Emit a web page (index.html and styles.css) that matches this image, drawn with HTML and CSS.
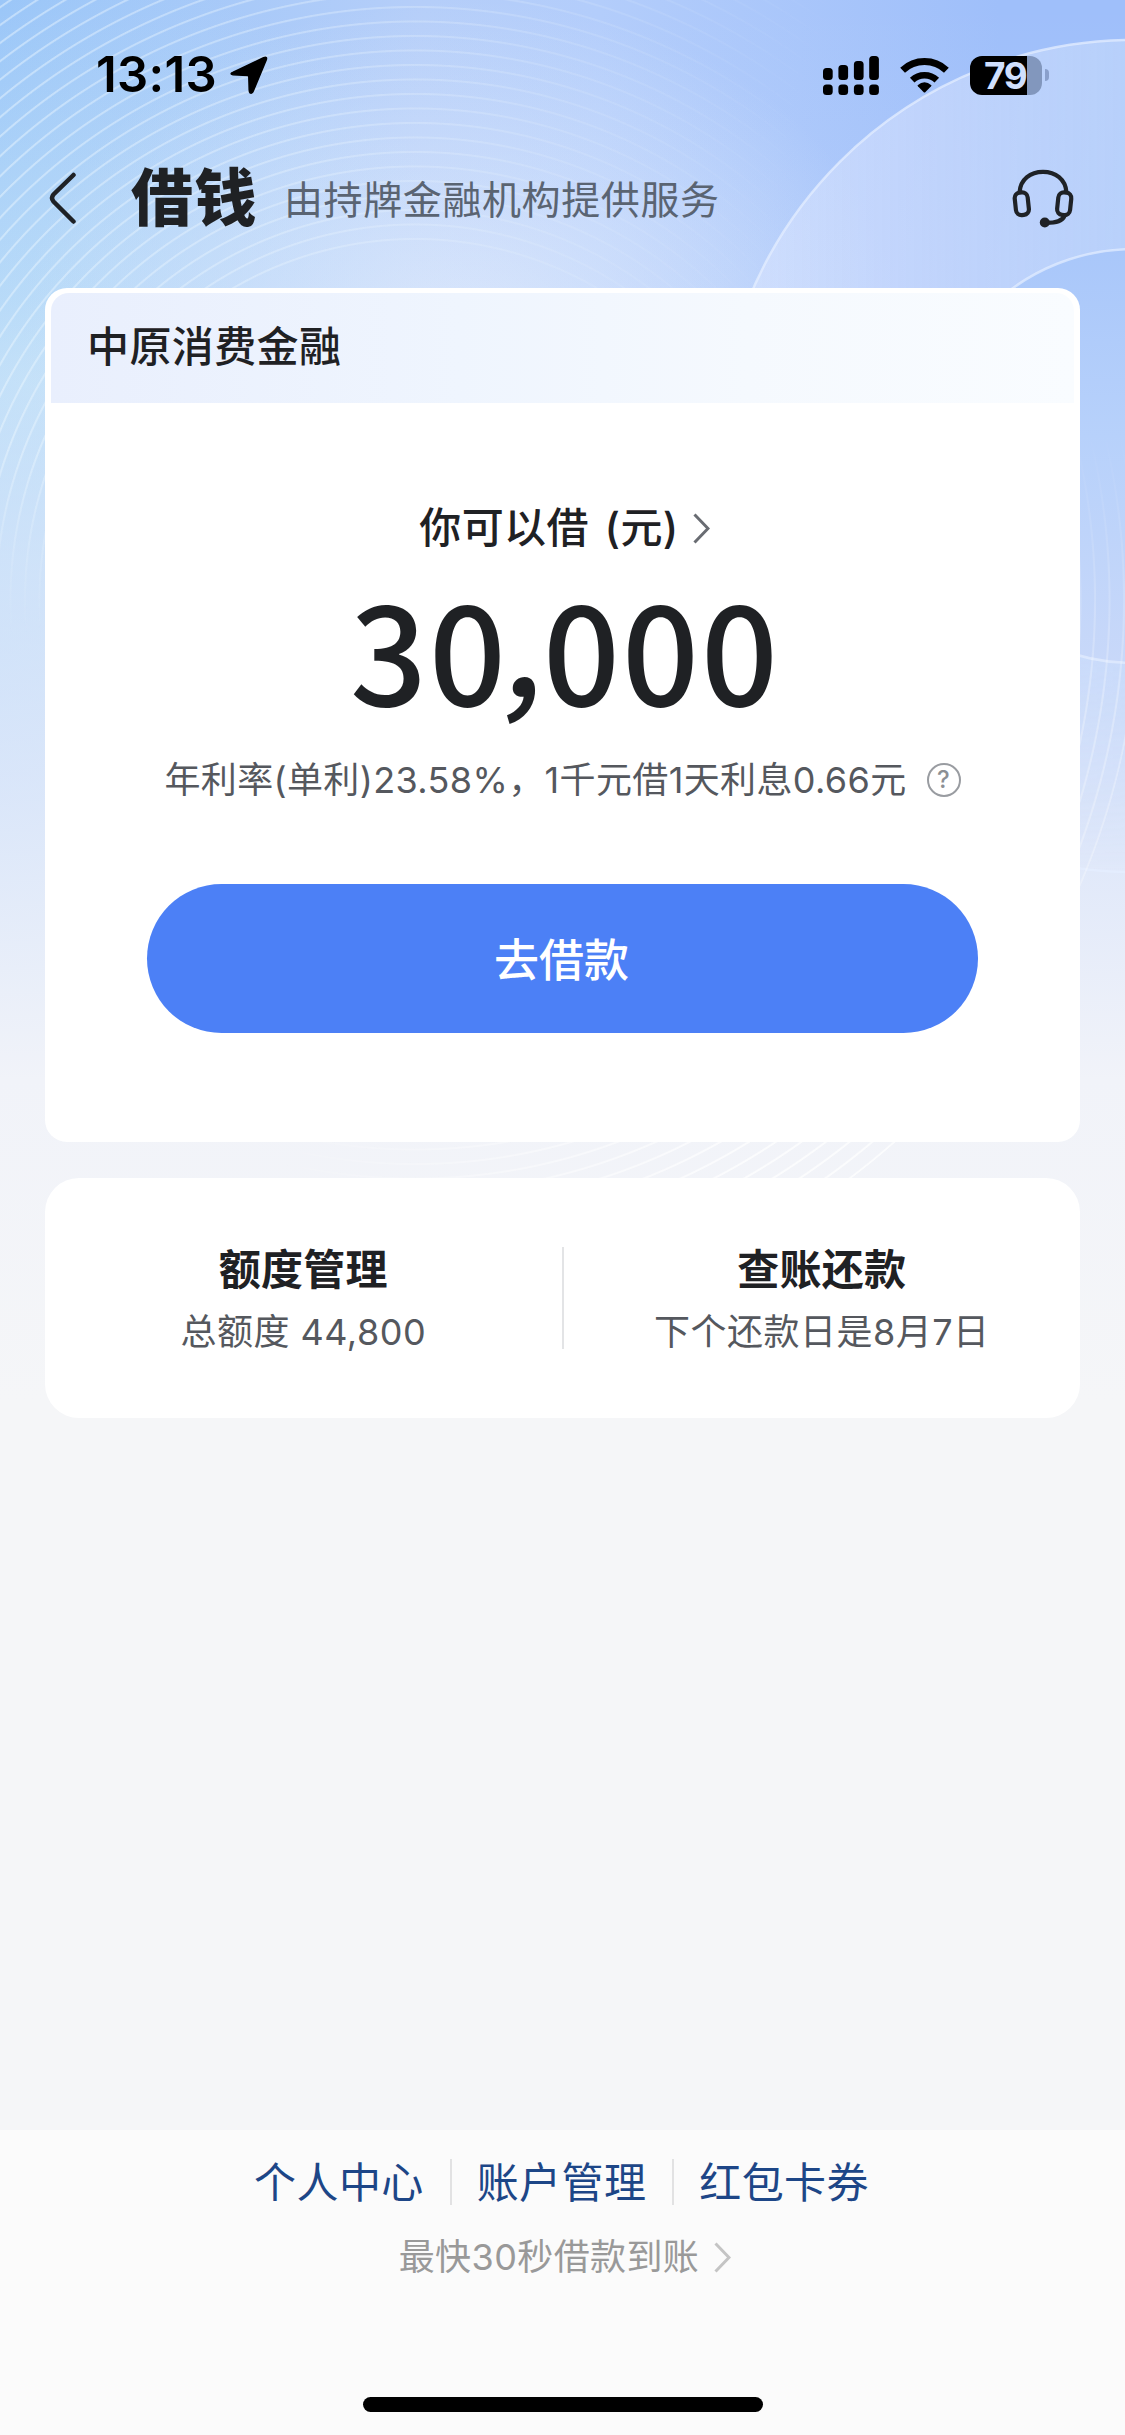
FILE: index.html
```html
<!DOCTYPE html>
<html lang="zh-CN">
<head>
<meta charset="utf-8">
<title>借钱</title>
<link rel="stylesheet" href="styles.css">
</head>
<body>
<div class="page">
  <div class="backdrop">
    <div class="rings"></div>
    <svg class="orbits" width="1125" height="1240" viewBox="0 0 1125 1240" fill="none">
      <defs>
        <linearGradient id="disc" x1="718" y1="0" x2="1125" y2="0" gradientUnits="userSpaceOnUse">
          <stop offset="0" stop-color="#dbe6ff" stop-opacity=".6"/>
          <stop offset=".5" stop-color="#cbdafc" stop-opacity=".7"/>
          <stop offset="1" stop-color="#bdd4fb" stop-opacity=".8"/>
        </linearGradient>
        <linearGradient id="core" x1="0" y1="249" x2="0" y2="663" gradientUnits="userSpaceOnUse">
          <stop offset="0" stop-color="#a9c7fa"/>
          <stop offset=".45" stop-color="#b7d1fb"/>
          <stop offset="1" stop-color="#c8d8f9"/>
        </linearGradient>
        <linearGradient id="fade" x1="0" y1="40" x2="0" y2="872" gradientUnits="userSpaceOnUse">
          <stop offset="0" stop-color="#fff"/>
          <stop offset=".5" stop-color="#fff"/>
          <stop offset="1" stop-color="#000"/>
        </linearGradient>
        <mask id="soft" maskUnits="userSpaceOnUse" x="700" y="0" width="425" height="900">
          <rect x="700" y="0" width="425" height="900" fill="url(#fade)"/>
        </mask>
      </defs>
      <circle cx="1134" cy="456" r="416" fill="url(#disc)" mask="url(#soft)"/>
      <circle cx="1134" cy="456" r="416" stroke="#e4eeff" stroke-opacity=".75" stroke-width="2.5"/>
      <circle cx="1134" cy="456" r="207" fill="url(#core)"/>
      <circle cx="1134" cy="456" r="207" stroke="#e4eeff" stroke-opacity=".7" stroke-width="2.5"/>
    </svg>
    <div class="rings rings-front"></div>
  </div>

  <div class="status">
    <span class="time">13:13</span>
    <svg class="locate" width="38" height="38" viewBox="0 0 38 38"><path d="M3.2 16.2 33.5 1.8Q37.600 .2 36.200 4L23.300 35Q22 38 20 36.800Q19.300 36 19.200 34L18.800 20.800Q18.700 19.500 17.500 19.400L3 18.800Q-1 18 3.200 16.200Z"/></svg>
    <div class="indicators">
      <svg class="signal" width="56" height="39" viewBox="0 0 56 39">
        <rect y="12" width="9.700" height="12" rx="3.500"/><rect x="15.400" y="9" width="9.700" height="15" rx="3.500"/><rect x="30.900" y="5" width="9.700" height="19" rx="3.500"/><rect x="46.200" width="9.700" height="24" rx="3.500"/>
        <rect y="28.500" width="9.700" height="10.500" rx="3.500"/><rect x="15.400" y="28.500" width="9.700" height="10.500" rx="3.500"/><rect x="30.900" y="28.500" width="9.700" height="10.500" rx="3.500"/><rect x="46.200" y="28.500" width="9.700" height="10.500" rx="3.500"/>
      </svg>
      <svg class="wifi" width="49" height="36" viewBox="0 0 49 36">
        <g fill="none" stroke="#000" stroke-width="7"><path d="M2.600 13.200A32 32 0 0 1 46.400 13.200"/><path d="M12.200 23.100A18 18 0 0 1 36.800 23.100" stroke-width="6.600"/></g>
        <path d="M17.600 28.200Q24.500 22.500 31.400 28.200Q31.600 28.700 31.100 29.300L25.500 35Q24.500 36 23.500 35L17.900 29.300Q17.400 28.700 17.600 28.200Z"/>
      </svg>
      <div class="battery"><div class="cell"><span class="level">79</span></div><div class="nub"></div></div>
    </div>
  </div>

  <div class="navbar">
    <svg class="back" width="28" height="52" viewBox="0 0 28 52"><path d="M24.500 3 4.500 22.500Q1.500 26 4.500 29.500L24.500 49.500"/></svg>
    <h1 class="title">借钱</h1>
    <span class="subtitle">由持牌金融机构提供服务</span>
    <svg class="headset" width="62" height="60" viewBox="0 0 62 60">
      <g fill="none" stroke="#1f2226" stroke-width="4.200" stroke-linecap="round">
        <path d="M7.600 23C8.500 10 18.500 2.800 31 2.800S53.500 10 54.400 23"/>
        <rect x="3.300" y="23.500" width="13" height="22.500" rx="5.500" transform="rotate(-6 9.800 34.700)"/>
        <rect x="45.700" y="23.500" width="13" height="22.500" rx="5.500" transform="rotate(6 52.200 34.700)"/>
        <path d="M52.800 46.500C50.500 52 45 53.800 34 53.800"/>
      </g>
      <circle cx="32.800" cy="53.500" r="5" fill="#1f2226"/>
    </svg>
  </div>

  <section class="loan">
    <div class="lender">中原消费金融</div>
    <div class="loan-body">
      <div class="label"><span>你可以借&nbsp;(元)</span>
        <svg width="17" height="31" viewBox="0 0 17 31"><path d="M1.500 1.500 15 15.500 1.500 29.500"/></svg></div>
      <div class="amount">30<span class="comma">,</span>000</div>
      <div class="rate"><span>年利率(单利)23.58%，1千元借1天利息0.66元</span><span class="help">?</span></div>
      <button class="borrow">去借款</button>
    </div>
  </section>

  <section class="entries">
    <div class="entry"><div class="entry-title">额度管理</div><div class="entry-note">总额度 44,800</div></div>
    <div class="divider"></div>
    <div class="entry"><div class="entry-title">查账还款</div><div class="entry-note">下个还款日是8月7日</div></div>
  </section>

  <footer class="footer">
    <nav class="links"><a>个人中心</a><a>账户管理</a><a>红包卡券</a></nav>
    <div class="tip"><span>最快30秒借款到账</span>
      <svg width="17" height="31" viewBox="0 0 17 31"><path d="M1.500 1.500 15 15.500 1.500 29.500"/></svg></div>
    <div class="home-bar"></div>
  </footer>
</div>
</body>
</html>
```
FILE: styles.css
```css
* { box-sizing: border-box; }

body {
  margin: 0;
  background: #f5f6f8;
  color: #1f2124;
  font-family: Inter, "Noto Sans CJK SC", sans-serif;
}

.page {
  position: relative;
  display: flex;
  flex-direction: column;
  width: 1125px;
  height: 2435px;
  overflow: hidden;
}

.backdrop {
  position: absolute;
  inset: 0 0 auto 0;
  height: 1400px;
  z-index: -1;
  background:
    linear-gradient(180deg, rgba(245,246,248,0) 0, rgba(238,241,250,.1) 300px, rgba(230,237,250,.6) 560px, rgba(233,238,250,.8) 780px, rgba(241,243,249,1) 1080px, #f5f6f8 1400px),
    radial-gradient(ellipse 440px 330px at 460px 330px, rgba(218,231,252,.9), rgba(218,231,252,0)),
    radial-gradient(ellipse 460px 420px at 30px 380px, rgba(190,225,248,.85), rgba(190,225,248,0)),
    linear-gradient(90deg, #98c4f8 0, #b5cef9 420px, #b3cdfb 600px, #9fbffa 1000px, #9fbffa 100%);
}

.orbits { position: absolute; inset: 0 auto auto 0; }

.rings {
  position: absolute;
  inset: 0;
  background: repeating-radial-gradient(circle at 415px 600px, transparent 0, transparent 11.400px, rgba(240,249,255,.45) 12.600px, rgba(240,249,255,.45) 13.600px, transparent 14.500px);
  mask-image:
    linear-gradient(100deg, #000 0, rgba(0,0,0,.75) 300px, rgba(0,0,0,.38) 540px, transparent 830px),
    radial-gradient(circle at 415px 600px, transparent 354px, #000 355px),
    linear-gradient(180deg, #000 450px, transparent 640px);
  mask-composite: intersect;
}

.rings-front {
  background: repeating-radial-gradient(circle at 415px 600px, transparent 0, transparent 11.400px, rgba(255,255,255,.7) 12.600px, rgba(255,255,255,.7) 13.600px, transparent 14.500px);
  mask-image:
    linear-gradient(90deg, transparent 250px, #000 750px, #000 1000px, rgba(0,0,0,.4) 1080px),
    radial-gradient(circle at 415px 600px, transparent 540px, #000 541px, #000 724px, transparent 725px),
    linear-gradient(180deg, transparent 430px, #000 700px);
}

.status {
  display: flex;
  align-items: center;
  height: 150px;
  padding-left: 96px;
  padding-right: 76px;
}
.time { color: #000; font-size: 49px; font-weight: 600; line-height: 60px; letter-spacing: .300px; }
.locate { margin-left: 13px; stroke: #000; stroke-width: 1.500px; overflow: visible; }
.indicators { display: flex; align-items: center; margin-left: auto; }
.wifi { margin-left: 21px; }
.battery { display: flex; align-items: center; margin-left: 21px; }
.cell {
  width: 72px;
  height: 39px;
  padding-left: 14px;
  border-radius: 12px;
  background: linear-gradient(90deg, #000 57px, #8297bd 57px);
  color: #cfdffd;
  line-height: 39px;
}
.level { font-size: 37px; font-weight: 700; letter-spacing: -1.500px; }
.nub { width: 4px; height: 12px; margin-left: 3px; border-radius: 0 6px 6px 0; background: #8aa0cc; }

.navbar {
  display: flex;
  align-items: center;
  height: 96px;
  padding: 0 51px 0 49px;
}
.back { fill: none; stroke: #1f2226; stroke-width: 4.500px; stroke-linecap: round; }
.title { margin: 1px 0 0 54px; font-size: 62px; font-weight: 900; line-height: 80px; letter-spacing: 1.500px; }
.subtitle { margin: 3px 0 0 26px; font-size: 39px; line-height: 56px; letter-spacing: .600px; color: #5a6472; }
.headset { margin: 2px 0 0 auto; }

.loan {
  height: 854px;
  margin: 42px 45px 0;
  padding: 5px 6px 0;
  border-radius: 22px;
  background: #fff;
}
.lender {
  height: 110px;
  padding-left: 36px;
  border-radius: 18px 18px 0 0;
  background: linear-gradient(90deg, #e9effd 0, #eff5fe 40%, #f5f9fe 68%, #f9fcff 100%);
  font-size: 42px;
  font-weight: 500;
  line-height: 107px;
  letter-spacing: .400px;
}
.loan-body { display: flex; flex-direction: column; align-items: center; }
.label {
  display: flex;
  align-items: center;
  gap: 14px;
  margin-top: 95px;
  padding-left: 4px;
  font-size: 42px;
  font-weight: 500;
  line-height: 60px;
  letter-spacing: .400px;
  word-spacing: 4px;
}
.label svg, .tip svg { fill: none; stroke: #696c72; stroke-width: 3px; }
.amount {
  margin-top: 4px;
  padding-left: 5px;
  font: 500 135px/170px "Noto Sans CJK SC", sans-serif;
  letter-spacing: 2px;
}
.comma { display: inline-block; width: 35px; transform: translateY(-9px) skewX(-6deg); }
.rate {
  display: flex;
  align-items: center;
  gap: 20px;
  margin-top: 21px;
  font-size: 36px;
  line-height: 54px;
  letter-spacing: .370px;
  color: #55585e;
}
.help {
  width: 34px;
  height: 34px;
  border: 2.500px solid #999ca1;
  border-radius: 50%;
  color: #8c8f94;
  font-size: 24px;
  font-weight: 500;
  line-height: 29px;
  text-align: center;
}
.borrow {
  width: 831px;
  height: 149px;
  margin-top: 77px;
  padding: 0 2px 1px 0;
  border: 0;
  border-radius: 75px;
  background: #4c80f6;
  color: #fff;
  font: 500 45px/60px "Noto Sans CJK SC", sans-serif;
}

.entries {
  display: flex;
  align-items: center;
  height: 240px;
  margin: 36px 45px 0;
  border-radius: 34px;
  background: #fff;
}
.entry { flex: 1; padding-top: 6px; text-align: center; }
.entry-title { font-size: 42px; font-weight: 700; line-height: 62px; letter-spacing: .300px; }
.entry-note { font-size: 36px; line-height: 62px; letter-spacing: .500px; color: #55585e; }
.divider { width: 2px; height: 102px; background: #e3e4e6; }

.footer {
  display: flex;
  flex-direction: column;
  align-items: center;
  height: 305px;
  margin-top: auto;
  background: #fbfbfb;
}
.links { display: flex; margin-top: 29px; padding-right: 1px; }
.links a {
  padding: 1px 26px 0 25px;
  color: #1d4687;
  font-size: 42px;
  line-height: 45px;
  letter-spacing: .400px;
}
.links a + a { border-left: 2px solid #e2e2e3; }
.tip {
  display: flex;
  align-items: center;
  gap: 15px;
  margin-top: 25px;
  padding-left: 5px;
  color: #999;
  font-size: 36px;
  line-height: 54px;
  letter-spacing: .400px;
}
.tip svg { stroke: #c4c4c4; }
.home-bar { width: 400px; height: 15px; margin-top: 113px; border-radius: 8px; background: #000; }
```
